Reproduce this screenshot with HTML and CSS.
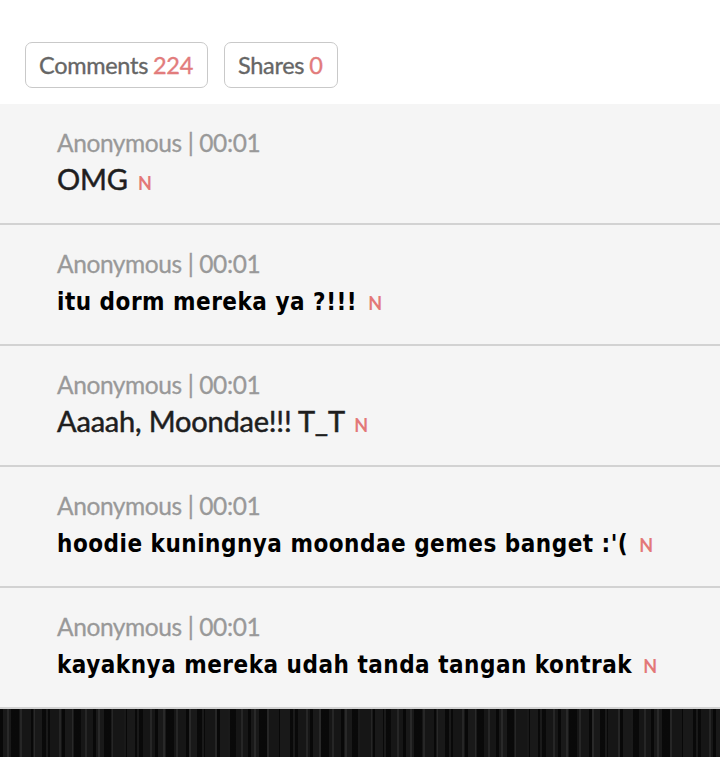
FILE: index.html
```html
<!DOCTYPE html>
<html lang="id">
<head>
<meta charset="utf-8">
<title>Comments</title>
<link rel="stylesheet" href="styles.css">
</head>
<body>
<div class="page">
  <div class="tabs">
    <div class="tab">Comments <span class="count">224</span></div>
    <div class="tab">Shares <span class="count">0</span></div>
  </div>
  <ul class="comments">
    <li class="comment">
      <div class="meta">Anonymous | 00:01</div>
      <div class="text lato">OMG <span class="new">N</span></div>
    </li>
    <li class="comment">
      <div class="meta">Anonymous | 00:01</div>
      <div class="text comic">itu dorm mereka ya ?!!! <span class="new">N</span></div>
    </li>
    <li class="comment">
      <div class="meta">Anonymous | 00:01</div>
      <div class="text lato">Aaaah, Moondae!!! T_T <span class="new">N</span></div>
    </li>
    <li class="comment">
      <div class="meta">Anonymous | 00:01</div>
      <div class="text comic">hoodie kuningnya moondae gemes banget :'( <span class="new">N</span></div>
    </li>
    <li class="comment">
      <div class="meta">Anonymous | 00:01</div>
      <div class="text comic">kayaknya mereka udah tanda tangan kontrak <span class="new">N</span></div>
    </li>
  </ul>
  <div class="footer"></div>
</div>
</body>
</html>
```
FILE: styles.css
```css
* { box-sizing: border-box; }
html, body { margin: 0; padding: 0; }
body {
  width: 720px;
  height: 757px;
  overflow: hidden;
  background: #ffffff;
  font-family: Lato, "Noto Sans", sans-serif;
}
.page { display: flex; flex-direction: column; height: 757px; }
.tabs {
  display: flex;
  gap: 16px;
  padding: 42px 0 16px 25px;
  background: #ffffff;
}
.tab {
  height: 46px;
  padding: 0 14px 0 13px;
  display: flex;
  align-items: center;
  gap: 5px;
  border: 1.5px solid #c9c9c9;
  border-radius: 7px;
  font-size: 23.5px;
  color: #666666;
  letter-spacing: -0.3px;
  -webkit-text-stroke: 0.35px #666666;
}
.tab .count { color: #e27c7c; -webkit-text-stroke-color: #e27c7c; }
.comments { list-style: none; margin: 0; padding: 0; background: #f5f5f5; }
.comment {
  height: 121px;
  padding: 25px 0 0 57px;
  border-bottom: 2px solid #d2d2d2;
  display: flex;
  flex-direction: column;
}
.meta {
  font-size: 24.5px;
  color: #999999;
  line-height: 28px;
  letter-spacing: -0.4px;
  -webkit-text-stroke: 0.3px #999999;
}
.text {
  margin-top: 5px;
  color: #161616;
  line-height: 34px;
  white-space: nowrap;
}
.text.lato {
  font-size: 29px;
  font-family: Lato, sans-serif;
  color: #1e1e1e;
  -webkit-text-stroke: 0.5px #1e1e1e;
  letter-spacing: -0.2px;
}
.text.comic {
  margin-top: 7px;
  font-family: "Comic Sans MS", "DejaVu Sans Condensed", "DejaVu Sans", sans-serif;
  font-stretch: condensed;
  font-weight: bold;
  font-size: 24px;
  color: #000;
  letter-spacing: 0.5px;
}
.new {
  font-family: Lato, sans-serif;
  font-weight: bold;
  font-size: 18px;
  color: #e37878;
  margin-left: 3px;
  letter-spacing: 0;
  -webkit-text-stroke: 0;
}
.footer {
  flex: 1;
  background-color: #0d0d0d;
  background-image:
    repeating-linear-gradient(90deg, rgba(255,255,255,0) 0 7px, rgba(255,255,255,0.07) 7px 9px, rgba(255,255,255,0) 9px 13px),
    repeating-linear-gradient(90deg, rgba(0,0,0,0.4) 0 3px, rgba(255,255,255,0.05) 3px 11px, rgba(0,0,0,0.3) 11px 19px, rgba(255,255,255,0.04) 19px 31px);
}
```
